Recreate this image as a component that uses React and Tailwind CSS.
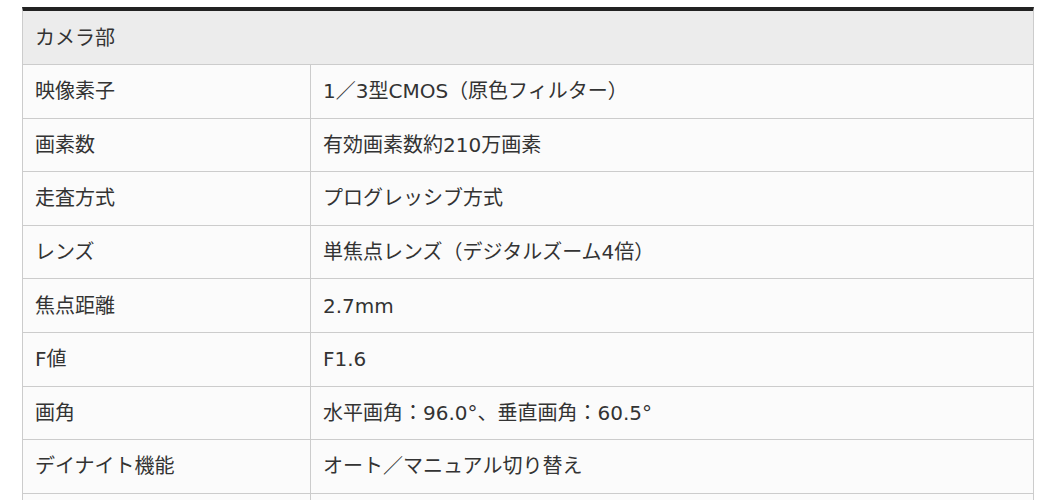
const rows = [
  ['映像素子', '1／3型CMOS（原色フィルター）'],
  ['画素数', '有効画素数約210万画素'],
  ['走査方式', 'プログレッシブ方式'],
  ['レンズ', '単焦点レンズ（デジタルズーム4倍）'],
  ['焦点距離', '2.7mm'],
  ['F値', 'F1.6'],
  ['画角', '水平画角：96.0°、垂直画角：60.5°'],
  ['デイナイト機能', 'オート／マニュアル切り替え'],
  ['逆光補正', 'あり'],
];

export default function App() {
  return (
    <div
      className="min-h-screen bg-white pt-[7px] pl-[22px] text-[#333] text-[20px]"
      style={{ fontFamily: '"DejaVu Sans", "Noto Sans CJK JP", sans-serif' }}
    >
      <div className="w-[1012px] border-t-4 border-t-[#222] border-x border-x-[#ccc]">
        <div className="h-[54px] flex items-center px-[12px] bg-[#ececec] border-b border-[#ccc]">
          カメラ部
        </div>
        {rows.map(([label, value], i) => (
          <div key={i} className="flex h-[53.6px] bg-[#fbfbfb] border-b border-[#ccc]">
            <div className="w-[288px] shrink-0 flex items-center px-[12px] border-r border-[#ccc]">
              {label}
            </div>
            <div className="flex-1 flex items-center px-[12px]">{value}</div>
          </div>
        ))}
      </div>
    </div>
  );
}
